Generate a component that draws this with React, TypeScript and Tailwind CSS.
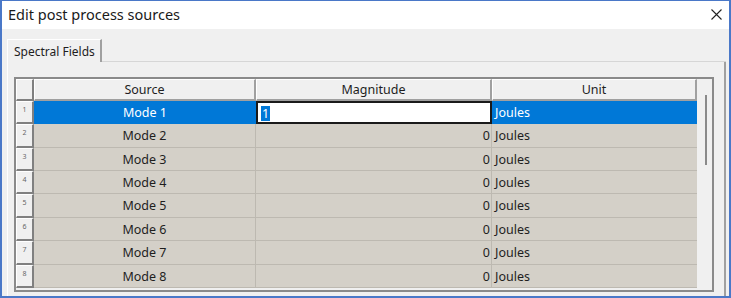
import React from "react";

const rowHeights = [23, 24, 23, 23, 24, 23, 24, 23];

const font = { fontFamily: '"Noto Sans", "Noto Sans CJK SC", sans-serif' };

function HeaderCell({ w, label }: { w: string; label: string }) {
  return (
    <div
      className={`${w} flex h-full items-center justify-center border-l border-t border-l-white border-t-white border-r-2 border-b-2 border-r-[#a0a0a0] border-b-[#a0a0a0] bg-[#f0f0f0] pt-[1px] text-[12.5px] text-[#1e1e1e]`}
    >
      {label}
    </div>
  );
}

function Row({ n, h, selected }: { n: number; h: number; selected: boolean }) {
  return (
    <div className="flex" style={{ height: h }}>
      <div className="flex w-[18px] shrink-0 justify-center border-l border-t border-l-white border-t-white border-r-2 border-b-2 border-r-[#808080] border-b-[#808080] bg-[#f0f0f0] pt-[3px] text-[7px] leading-[9px] text-[#666]">
        {n}
      </div>
      {selected ? (
        <>
          <div className="flex w-[222px] shrink-0 items-center justify-center border-b border-[#0078d7] bg-[#0078d7] pt-[2px] text-[12.5px] text-white">
            Mode {n}
          </div>
          <div className="flex w-[236px] shrink-0 items-center border-2 border-[#1a1a1a] bg-white pl-[3px] pt-[1px] text-[12.5px]">
            <span className="bg-[#0078d7] px-[1px] leading-[15px] text-white">1</span>
          </div>
          <div className="flex w-[205px] shrink-0 items-center bg-[#0078d7] pl-[3px] pt-[2px] text-[12.5px] text-white">
            Joules
          </div>
        </>
      ) : (
        <>
          <div className="flex w-[222px] shrink-0 items-center justify-center border-b border-r border-[#bdb9b1] bg-[#d4d0c8] pt-[2px] text-[12.5px] text-[#1e1e1e]">
            Mode {n}
          </div>
          <div className="flex w-[236px] shrink-0 items-center justify-end border-b border-r border-[#bdb9b1] bg-[#d4d0c8] pr-[1px] pt-[2px] text-[12.5px] text-[#1e1e1e]">
            0
          </div>
          <div className="flex w-[205px] shrink-0 items-center border-b border-[#bdb9b1] bg-[#d4d0c8] pl-[3px] pt-[2px] text-[12.5px] text-[#1e1e1e]">
            Joules
          </div>
        </>
      )}
    </div>
  );
}

export default function App() {
  return (
    <div
      className="flex h-[298px] w-[731px] flex-col overflow-hidden border-x-2 border-b-2 border-t border-[#4a78c8] bg-[#f0f0f0]"
      style={font}
    >
      <div className="flex h-[28px] shrink-0 items-center justify-between bg-white pl-[6px] pr-[7px] text-[14.5px] text-[#1a1a1a]">
        <span>Edit post process sources</span>
        <svg width="11" height="11" viewBox="0 0 11 11" className="mb-[1px]">
          <path d="M0.5 0.5 L10.5 10.5 M10.5 0.5 L0.5 10.5" stroke="#222" strokeWidth="1.1" />
        </svg>
      </div>

      <div className="flex flex-1 flex-col pl-[5px] pr-[3px] pt-[10px]">
        <div className="flex">
          <div className="flex h-[23px] w-[95px] items-center whitespace-nowrap border-l border-t border-l-white border-t-white border-r-2 border-r-[#a0a0a0] pl-[6px] pt-[1px] text-[12px] text-[#1e1e1e]">
            Spectral Fields
          </div>
          <div className="flex-1 self-end border-b border-b-[#d6d6d6]" />
        </div>

        <div className="flex flex-1 flex-col border-l border-l-white border-r-2 border-r-[#a0a0a0] pl-[6px] pr-[10px] pt-[15px]">
          <div className="flex h-[215px] w-[700px] flex-col border-2 border-[#8a8a8a] bg-[#f0f0f0]">
            <div className="flex">
              <div className="flex flex-col">
                <div className="flex h-[22px]">
                  <div className="h-full w-[18px] border-l border-t border-l-white border-t-white border-r-2 border-b-2 border-r-[#808080] border-b-[#808080] bg-[#f0f0f0]" />
                  <HeaderCell w="w-[222px]" label="Source" />
                  <HeaderCell w="w-[236px]" label="Magnitude" />
                  <HeaderCell w="w-[205px]" label="Unit" />
                </div>
                {rowHeights.map((h, i) => (
                  <Row key={i} n={i + 1} h={h} selected={i === 0} />
                ))}
              </div>
              <div className="relative flex-1 bg-[#f0f0f0]">
                <div className="absolute left-[8px] top-[16px] h-[70px] w-[2px] bg-[#8a8a8a]" />
              </div>
            </div>
          </div>
        </div>
      </div>
    </div>
  );
}
